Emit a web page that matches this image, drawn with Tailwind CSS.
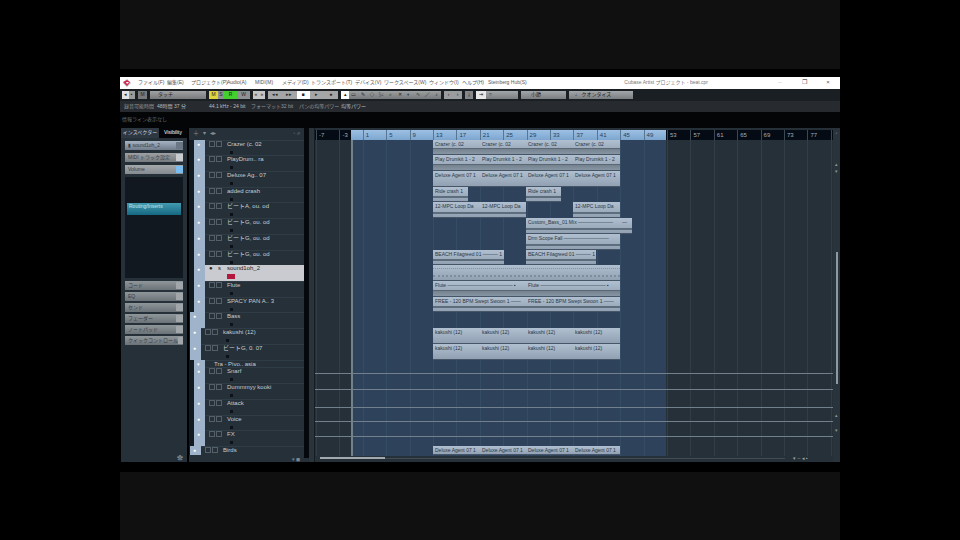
<!DOCTYPE html>
<html lang="ja">
<head>
<meta charset="utf-8">
<title>Cubase Artist プロジェクト</title>
<script src="https://cdn.jsdelivr.net/npm/@tailwindcss/browser@4"></script>
</head>
<body class="bg-black font-['Liberation_Sans','Noto_Sans_CJK_JP',sans-serif] text-[6px] leading-[7px] text-slate-300">
<div class="mx-auto flex min-h-screen w-3/4 flex-col whitespace-nowrap">
  <div class="mb-2 flex-1 bg-[#101010]"></div>

  <div class="flex h-[385px] flex-col overflow-hidden">
    <header class="flex h-3 items-center bg-white text-[5px] text-[#555]">
      <svg class="mx-[3px] size-2" viewBox="0 0 8 8" aria-hidden="true"><path d="M4 0 8 4 4 8 0 4Z" fill="#b9b4ba"/><path d="M0 3 4 1 7 3 4 7Z" fill="#cf2b50"/><path d="M3 3h3L4 5Z" fill="#fff"/></svg>
      <nav class="flex flex-1 items-center" aria-label="メニュー">
        <button class="ml-1 w-[29px] text-left">ファイル(F)</button>
        <button class="w-[24px] text-left">編集(E)</button>
        <button class="w-[36px] text-left">プロジェクト(P)</button>
        <button class="w-[28px] text-left">Audio(A)</button>
        <button class="w-[27px] text-left">MIDI(M)</button>
        <button class="w-[29px] text-left">メディア(D)</button>
        <button class="w-[44px] text-left">トランスポート(T)</button>
        <button class="w-[29px] text-left">デバイス(V)</button>
        <button class="w-[45px] text-left">ワークスペース(W)</button>
        <button class="w-[33px] text-left">ウィンドウ(I)</button>
        <button class="w-[26px] text-left">ヘルプ(H)</button>
        <button class="text-left">Steinberg Hub(S)</button>
      </nav>
      <h1 class="mr-[60px] text-[#777]">Cubase Artist プロジェクト - beat.cpr</h1>
      <div class="flex w-[72px] justify-around text-[6px]">
        <button aria-label="最小化" class="w-3 text-[#bbb]">–</button>
        <button aria-label="元のサイズ" class="w-3">❐</button>
        <button aria-label="閉じる" class="w-3">×</button>
      </div>
    </header>

    <div class="flex h-3 items-center gap-[3px] bg-[#1a1f24] px-[2px] text-[5px] text-[#222]" role="toolbar" aria-label="ツールバー">
      <div class="flex h-2 w-[13px] bg-[#9a9b9b]"><button class="flex-1 bg-[#e2e2e2]" aria-label="アクティブ">◂</button><button class="flex-1" aria-label="遅延補正">▪</button></div>
      <button class="h-2 w-[9px] bg-[#77797b]">M</button>
      <select aria-label="オートメーション" class="h-2 w-[56px] appearance-none bg-linear-to-b from-[#a0a2a3] to-[#77797b] px-2"><option>タッチ</option></select>
      <div class="flex h-2 w-[41px] bg-[#8e9192]"><button class="w-[9px] bg-[#dfd33e]">M</button><button class="w-[6px]">S</button><button class="w-[13px] bg-[#43d02f]">R</button><button class="flex-1">W</button></div>
      <div class="flex h-2 w-[12px] bg-[#c4c5c5]"><button class="flex-1">«</button><button class="flex-1">»</button></div>
      <div class="flex h-2 w-[70px] bg-[#a3a5a6]">
        <button class="flex-1" aria-label="前へ">◂◂</button><button class="flex-1" aria-label="次へ">▸▸</button><button class="w-[13px] bg-white" aria-label="停止">■</button><button class="flex-1" aria-label="再生">▸</button><button class="flex-1" aria-label="録音">●</button>
      </div>
      <div class="flex h-2 w-[100px] bg-linear-to-b from-[#9da0a1] to-[#777a7c]" role="group" aria-label="ツール">
        <button class="w-2 bg-white" aria-label="選択">▴</button><button class="flex-1">▭</button><button class="flex-1">✎</button><button class="flex-1">◇</button><button class="flex-1">✂</button><button class="flex-1">⌕</button><button class="flex-1">✕</button><button class="flex-1">◐</button><button class="flex-1">∿</button><button class="flex-1">／</button><button class="flex-1">♪</button>
      </div>
      <div class="flex h-2 w-[18px] bg-[#9a9d9f]"><button class="flex-1">‹</button><button class="flex-1">›</button></div>
      <button class="h-2 w-[8px] bg-[#85888a]">⤓</button>
      <div class="flex h-2 w-[42px] bg-linear-to-b from-[#a4a7a9] to-[#7b7e80]"><button class="w-[10px] bg-[#e8e8e8]">⇥</button><button class="w-2">⌗</button></div>
      <select aria-label="グリッド" class="h-2 w-[45px] appearance-none bg-linear-to-b from-[#a4a7a9] to-[#7b7e80] px-[10px]"><option>小節</option></select>
      <select aria-label="クオンタイズ" class="h-2 w-[64px] appearance-none bg-linear-to-b from-[#a4a7a9] to-[#7b7e80] px-[6px]"><option>♩ クオンタイズ</option></select>
    </div>

    <div class="flex h-[11px] items-center bg-[#272b2f] px-1 text-[5px] text-[#92979b]">
      <span class="w-[33px]">録音可能時間</span><span class="w-[52px] text-[#b9bdc1]">48時間 37 分</span><span class="w-[42px] text-[#b9bdc1]">44.1 kHz - 24 bit</span><span class="w-[30px]">フォーマット</span><span class="w-[18px]">32 bit</span><span class="w-[42px]">パンの均等パワー</span><span class="text-[#b9bdc1]">均等パワー</span>
    </div>
    <div class="h-4 bg-[#030506] px-[2px] pt-1 text-[5px] text-[#666c70]">情報ライン表示なし</div>

    <main class="flex min-h-0 flex-1 bg-[#263038]">
      <aside class="flex w-[67px] flex-col border-l border-black px-1" aria-label="インスペクター">
        <div class="-mx-1 flex h-[10px] items-center text-[5px]"><button class="h-full flex-1 bg-[#2d3841]">インスペクター</button><button class="h-full w-[28px] bg-[#030508] text-white">Visibility</button></div>
        <div id="head" class="mt-[3px] flex flex-col gap-[3px]"></div>
        <div class="mt-[3px] h-[101px] bg-[#11181f] px-[2px] pt-[26px]"><button class="h-3 w-full bg-linear-to-b from-[#429bb0] to-[#146881] px-[2px] pb-1 text-left text-[5px] text-[#c5e6ed]">Routing/Inserts</button></div>
        <div id="strips" class="mt-[3px] flex flex-col gap-[2px]"></div>
        <button aria-label="設定" class="mt-auto self-end text-[#7c878f]">✿</button>
      </aside>

      <section class="flex w-[117px] flex-col border-l-2 border-black" aria-label="トラックリスト">
        <div class="flex h-3 items-center gap-1 px-1 text-[#83909a]"><button aria-label="トラックを追加">＋</button><button aria-label="表示">▾</button><button aria-label="検索">◂▸</button><span class="ml-auto">◦ ⌕</span></div>
        <div id="tracks" class="flex min-h-0 flex-1 flex-col"></div>
        <div class="h-[6px] pr-1 text-right text-[5px] leading-[6px] text-[#7c878f]">▾ ◼</div>
      </section>
      <div class="w-[5px] border-b-4 border-[#263038] bg-[#05090d]"></div>
      <div class="w-[6px] border-r border-[#151c22] bg-[#2b343a]"></div>

      <section class="flex min-w-0 flex-1 flex-col" aria-label="プロジェクト">
        <div id="ruler" class="relative mt-[2px] h-[10px] overflow-hidden bg-[#050b14]"></div>
        <div class="relative flex min-h-0 flex-1 flex-col">
          <div id="grid" class="absolute inset-0"></div>
          <div id="lanes" class="relative flex min-h-0 flex-1 flex-col"></div>
        </div>
        <div class="flex h-[6px] items-start bg-[#263038] pl-[5px]"><div class="mt-px h-[2px] w-[65px] bg-[#a1aaae]"></div><div class="mt-[2px] h-px flex-1 bg-[#414c54]"></div><span class="w-12 pl-2 text-[5px] leading-[5px] text-[#9da6ac]">▾ – ◂ ▪</span></div>
      </section>

      <div class="flex w-[7px] flex-col items-center bg-[#29333b] text-[5px] text-[#89939a]">
        <span class="mt-[2px]">▫</span>
        <span class="mt-6">▴</span><span>▾</span>
        <div class="mt-[77px] h-[132px] w-[2px] bg-[#8d99a2]"></div>
        <span class="mt-7">▴</span><span class="mt-2">▾</span>
      </div>
    </main>
  </div>

  <div class="mt-[10px] flex-1 bg-[#101010]"></div>
</div>

<script>
const SPAN = 518;
const pct = v => (v / SPAN * 100) + '%';

const strip = (name, look, knob) =>
  `<button class="flex h-[9px] items-center bg-linear-to-b ${look} pl-[3px] text-left text-[5px] text-[#343b42]"><span class="flex-1">${name}</span><i class="h-[7px] w-[7px] ${knob}"></i></button>`;
document.getElementById('head').innerHTML =
  strip('▮ sound1oh_2', 'from-[#a6b3c2] to-[#717d8d]', 'bg-[#6b7785]') +
  strip('MIDI トラック設定', 'from-[#9da1a4] to-[#777c80]', 'bg-[#c9ccce]') +
  strip('Volume', 'from-[#a3a8ab] to-[#858b90]', 'bg-[#7cbdf0]');
document.getElementById('strips').innerHTML =
  ['コード', 'EQ', 'センド', 'フェーダー', 'ノートパッド', 'クイックコントロール'].map(n =>
    strip(n, 'from-[#90979b] to-[#6b7378]', 'bg-[#a0a6a9]')).join('');

// Height class is shared by a track header and its lane.
const FULL = 'grow-[20] basis-0', HALF = 'grow-[10] basis-0', CUT = 'grow-[12] basis-0';
const four = n => [118, 165, 211, 258].map((x, i, a) => [x, a[i + 1] || 305, n]);
const rows = [
  { n: 'Crazer (c. 02', look: 'wave', c: four('Crazer (c. 02') },
  { n: 'PlayDrum.. ra', look: 'wave', c: four('Play Drumkit 1 - 2') },
  { n: 'Deluxe Ag.. 07', look: 'flat', c: four('Deluxe Agent 07 1') },
  { n: 'added crash', look: 'line', c: [[118, 153, 'Ride crash 1'], [211, 246, 'Ride crash 1']] },
  { n: 'ビートA, ou. od', look: 'line', c: [[118, 165, '12-MPC Loop Da'], [165, 211, '12-MPC Loop Da'], [258, 305, '12-MPC Loop Da']] },
  { n: 'ビートG, ou. od', look: 'line', c: [[211, 305, 'Custom_Bass_01 Mix ———————'], [305, 317, '—']] },
  { n: 'ビートG, ou. od', look: 'line', c: [[211, 305, 'Drm Scope Fall —————————']] },
  { n: 'ビートG, ou. od', look: 'line', c: [[118, 189, 'BEACH Filagreed 01 ——— 1'], [211, 281, 'BEACH Filagreed 01 ——— 1']] },
  { n: 'sound1oh_2', look: 'beat', sel: true, c: [[118, 305, '']] },
  { n: 'Flute', look: 'wave', c: [[118, 211, 'Flute ————————————— ▪'], [211, 305, 'Flute ————————————— ▪']] },
  { n: 'SPACY PAN A.. 3', look: 'line', c: [[118, 211, 'FREE - 120 BPM Swept Swoon 1 ——'], [211, 305, 'FREE - 120 BPM Swept Swoon 1 ——']] },
  { n: 'Bass', look: 'flat', edge: true, c: [] },
  { n: 'kakushi (12)', look: 'flat', out: true, c: four('kakushi (12)') },
  { n: 'ビートG, 0. 07', look: 'flat', out: true, c: four('kakushi (12)') },
  { n: 'Tra - Pivo.. asia', h: HALF, folder: true, c: [] },
  { n: 'Snarf', auto: 35, c: [] },
  { n: 'Dummmyy kooki', auto: 36, c: [] },
  { n: 'Attack', auto: 50, c: [] },
  { n: 'Voice', auto: 40, c: [] },
  { n: 'FX', auto: 38, c: [] },
  { n: 'Birds', h: CUT, look: 'flat', out: true, c: four('Deluxe Agent 07 1') }
];

const boxes = '<button class="h-[6px] w-[6px] border border-[#536069]" aria-label="ミュート"></button><button class="ml-px h-[6px] w-[6px] border border-[#536069]" aria-label="ソロ"></button>';
document.getElementById('tracks').innerHTML = rows.map(t => {
  const pad = t.out || t.edge ? 'pl-px' : 'pl-[5px]';
  const bar = t.edge ? 'w-[15px]' : 'w-[11px]';
  const body = t.sel ? 'bg-[#c9cbd0] text-[#20242a]' : 'bg-[#263038] border-t border-[#303c45] text-[#c5cdd3]';
  return `<div class="flex min-h-0 ${t.h || FULL} ${pad} bg-[#131b22]">
    <div class="${bar} shrink-0 bg-[#9fb4cb] pt-px pl-[3px] text-[5px] leading-[6px] text-white">${t.folder ? '▾' : '●'}</div>
    <div class="relative flex min-w-0 flex-1 items-start ${body} pl-1">
      ${t.folder ? '' : t.sel ? '<button class="w-2 text-left" aria-label="ミュート">●</button><button class="w-[5px]" aria-label="ソロ">s</button>' : boxes}
      <span class="ml-[5px] leading-[7px]">${t.n}</span>
      ${t.folder || t.h ? '' : t.sel ? '<button aria-label="録音可能" class="absolute top-[9px] left-[22px] h-[5px] w-2 bg-[#b5173c]"></button>' : '<i class="absolute top-[10px] left-[25px] h-[3px] w-[3px] bg-[#0b1116]"></i>'}
    </div></div>`;
}).join('');

const wave = {
  wave: '<i class="absolute inset-x-0 bottom-0 h-[6px] border-t border-[#5b6874] bg-linear-to-b from-[#74828f] to-[#8896a3]"></i>',
  line: '<i class="absolute inset-x-0 bottom-[3px] h-[2px] bg-[#5e6d7c]"></i>',
  flat: '',
  beat: '<i class="absolute inset-x-0 top-[3px] border-t border-dotted border-[#8493a3]"></i><i class="absolute inset-x-0 bottom-[3px] border-t-2 border-dotted border-[#7e8d9c]"></i>'
};
document.getElementById('lanes').innerHTML = rows.map(t => `<div class="relative min-h-0 ${t.h || FULL}">${
  t.c.map(([a, b, n]) => `<div class="absolute inset-y-0 overflow-hidden border-b border-[#465667] bg-linear-to-b from-[#b1c0d0] to-[#91a1b3] pt-px pl-[2px] text-[5px] leading-[6px] text-[#2a3644]" style="left:${pct(a)};width:${pct(b - a)}">${n}${wave[t.look]}</div>`).join('')
}${t.auto ? `<i class="absolute inset-x-0 h-px bg-[#71808c]" style="top:${t.auto}%"></i>` : ''}</div>`).join('');

let grid = `<div class="absolute inset-y-0 bg-[#2e435b]" style="left:${pct(36)};width:${pct(315)}"></div>`;
let ruler = `<div class="absolute inset-y-0 bg-linear-to-b from-[#9dc0e3] to-[#7da6cf]" style="left:${pct(36)};width:${pct(315)}"></div>`;
for (let i = 0; i < 23; i++) {
  const x = 1 + i * 23.4, lit = x > 36 && x < 350;
  grid += `<i class="absolute inset-y-0 w-px ${lit ? 'bg-[#354c65]' : 'bg-[#323e47]'}" style="left:${pct(x)}"></i>`;
  ruler += `<span class="absolute inset-y-0 border-l pt-[2px] pl-[2px] ${lit ? 'border-[#567694] text-[#26405c]' : 'border-[#3c4853] text-[#a3acb5]'}" style="left:${pct(x)}">${i < 22 ? -7 + i * 4 : ''}</span>`;
}
grid += `<i class="absolute inset-y-0 w-[2px] bg-[#73818b]" style="left:${pct(36)}"></i>`;
document.getElementById('grid').innerHTML = grid;
document.getElementById('ruler').innerHTML = ruler;
</script>
</body>
</html>
